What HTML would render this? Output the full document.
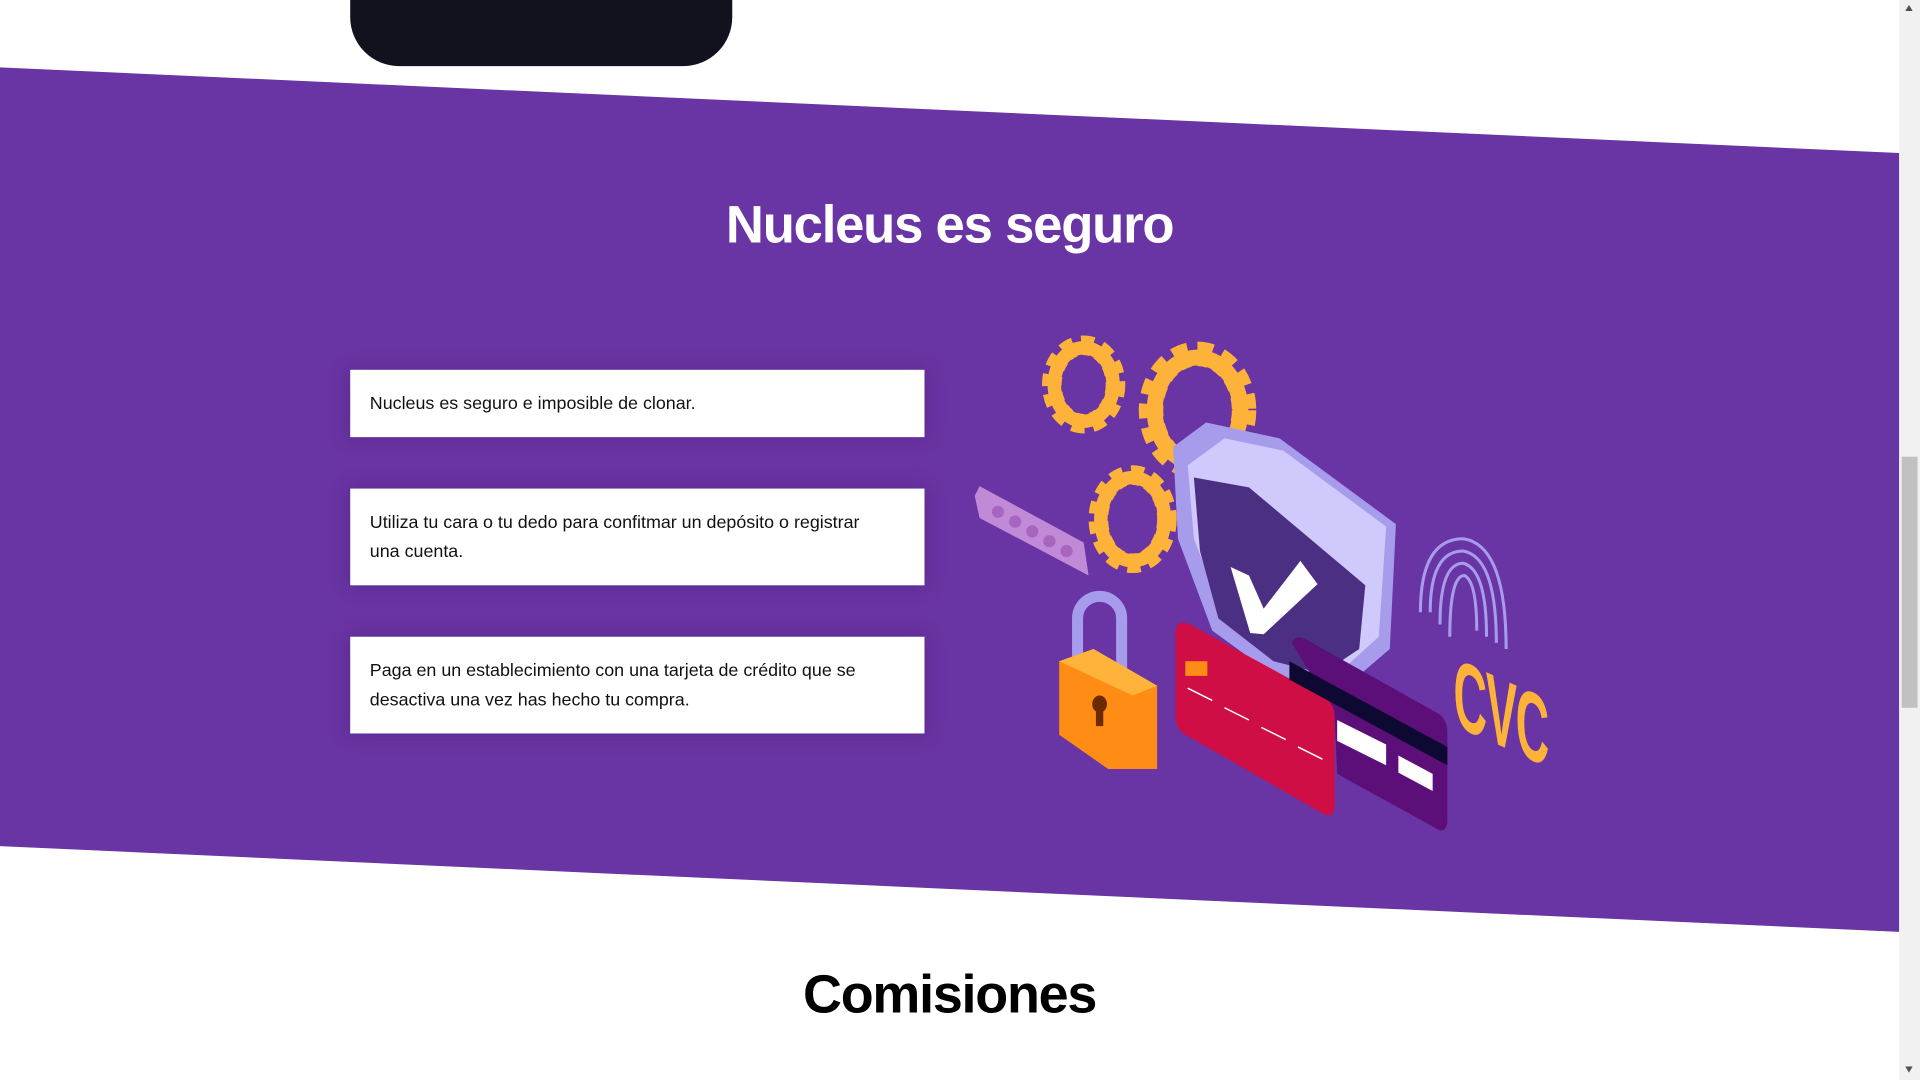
<!DOCTYPE html>
<html><head><meta charset="utf-8"><style>
html,body{margin:0;padding:0;width:1920px;height:1080px;overflow:hidden;background:#fff;}
#w{position:absolute;left:0;top:0;width:1568px;height:882px;transform:scale(1.22449);transform-origin:0 0;font-family:"Liberation Sans",sans-serif;}
.box{position:absolute;left:286px;width:469px;background:#fff;box-shadow:0 0 14px rgba(60,20,100,.35);color:#111;font-size:14.6px;line-height:24px;padding:16px 40px 0 16px;box-sizing:border-box;}
h2{position:absolute;margin:0;left:0;width:1551px;text-align:center;font-size:43px;font-weight:bold;letter-spacing:-1px;}
</style></head><body><div id="w">
<svg width="1568" height="882" style="position:absolute;left:0;top:0">
<path d="M286 0H598V14A40 40 0 0 1 558 54H326A40 40 0 0 1 286 14Z" fill="#12111e"/>
<polygon points="0,55 1551,125 1551,761 0,691" fill="#6934a3"/>
<rect x="1551" y="0" width="17" height="882" fill="#f1f1f1"/>
<rect x="1553" y="373" width="13" height="205" fill="#c1c1c1"/>
<polygon points="1556,9 1559,4 1562,9" fill="#505050"/><polygon points="1556,871 1559,876 1562,871" fill="#505050"/>
<g fill="none" stroke="#fdb23a">
<ellipse cx="885" cy="314" rx="26" ry="32" stroke-width="16" stroke-dasharray="9 6"/>
<ellipse cx="885" cy="314" rx="24" ry="30" stroke-width="11"/>
<ellipse cx="978" cy="335" rx="38" ry="46" stroke-width="20" stroke-dasharray="11 7"/>
<ellipse cx="978" cy="335" rx="35" ry="43" stroke-width="13"/>
<ellipse cx="925" cy="424" rx="28" ry="36" stroke-width="16" stroke-dasharray="9 6"/>
<ellipse cx="925" cy="424" rx="26" ry="34" stroke-width="11"/>
</g>
<polygon points="800,397 885,443 889,470 800,423 796,405" fill="#c08ad6"/>
<g fill="#a765c0"><circle cx="815" cy="418" r="5"/><circle cx="829" cy="426" r="5"/><circle cx="843" cy="434" r="5"/><circle cx="857" cy="442" r="5"/><circle cx="871" cy="450" r="5"/></g>
<path d="M958 365L985 345L1045 358L1140 428L1135 530L1100 560L1045 555L990 515L962 440Z" fill="#a79cec"/>
<path d="M1000 358L1048 368L1132 430L1126 520L1095 548L1050 540L1000 505L975 440L970 380Z" fill="#d0c9fb"/>
<path d="M975 390L1020 398L1115 478L1110 530L1080 550L1040 540L995 505L980 450Z" fill="#4b2f82"/>
<polygon points="1005,463 1020,470 1032,497 1062,458 1076,477 1032,518 1021,517" fill="#fff"/>
<path d="M880 545V505A18 18 0 0 1 916 505V560" fill="none" stroke="#a79cec" stroke-width="9"/>
<polygon points="865,540 893,530 945,560 945,628 905,628 865,600" fill="#ff8c14"/>
<polygon points="865,540 893,530 945,560 925,568" fill="#ffb33b"/>
<ellipse cx="898" cy="575" rx="6" ry="7" fill="#6b2a00"/><rect x="895" y="575" width="6" height="18" fill="#6b2a00"/>
<path d="M960 515Q962 505 972 510L1082 570Q1090 575 1090 585V660Q1088 670 1078 663L968 600Q960 595 960 585Z" fill="#cf0e45"/>
<g fill="none" stroke="#fff" stroke-width="1.2"><path d="M970 562l20 10M1000 578l20 10M1030 594l20 10M1060 610l20 10"/></g>
<rect x="968" y="540" width="18" height="12" fill="#ff8c14"/>
<path d="M1055 525Q1058 518 1066 522L1175 583Q1182 588 1182 598V672Q1180 682 1172 676L1092 632L1090 585Q1090 575 1082 570Z" fill="#5c0f78"/>
<polygon points="1053,540 1182,610 1182,625 1053,555" fill="#0e0932"/>
<polygon points="1092,588 1132,608 1132,625 1092,605" fill="#fff"/>
<polygon points="1142,617 1170,632 1170,646 1142,631" fill="#fff"/>
<g fill="none" stroke="#a79cec" stroke-width="2.5">
<path d="M1160 500Q1160 440 1195 440Q1230 445 1230 530"/>
<path d="M1168 500Q1168 450 1195 450Q1222 455 1222 525"/>
<path d="M1176 510Q1176 460 1195 460Q1214 465 1214 520"/>
<path d="M1184 520Q1184 470 1196 470Q1206 475 1206 515"/>
</g>
<text transform="translate(1187,592) skewY(24) scale(1,2.1)" font-family="Liberation Sans Narrow, Liberation Sans" font-weight="bold" font-size="38" fill="#fdb23a" letter-spacing="-1">CVC</text>
</svg>
<h2 style="top:160px;color:#fff">Nucleus es seguro</h2>
<div class="box" style="top:302px;height:55px">Nucleus es seguro e imposible de clonar.</div>
<div class="box" style="top:399px;height:79px">Utiliza tu cara o tu dedo para confitmar un depósito o registrar una cuenta.</div>
<div class="box" style="top:520px;height:79px">Paga en un establecimiento con una tarjeta de crédito que se desactiva una vez has hecho tu compra.</div>
<h2 style="top:788px;color:#000;font-size:44px">Comisiones</h2>
</div></body></html>
